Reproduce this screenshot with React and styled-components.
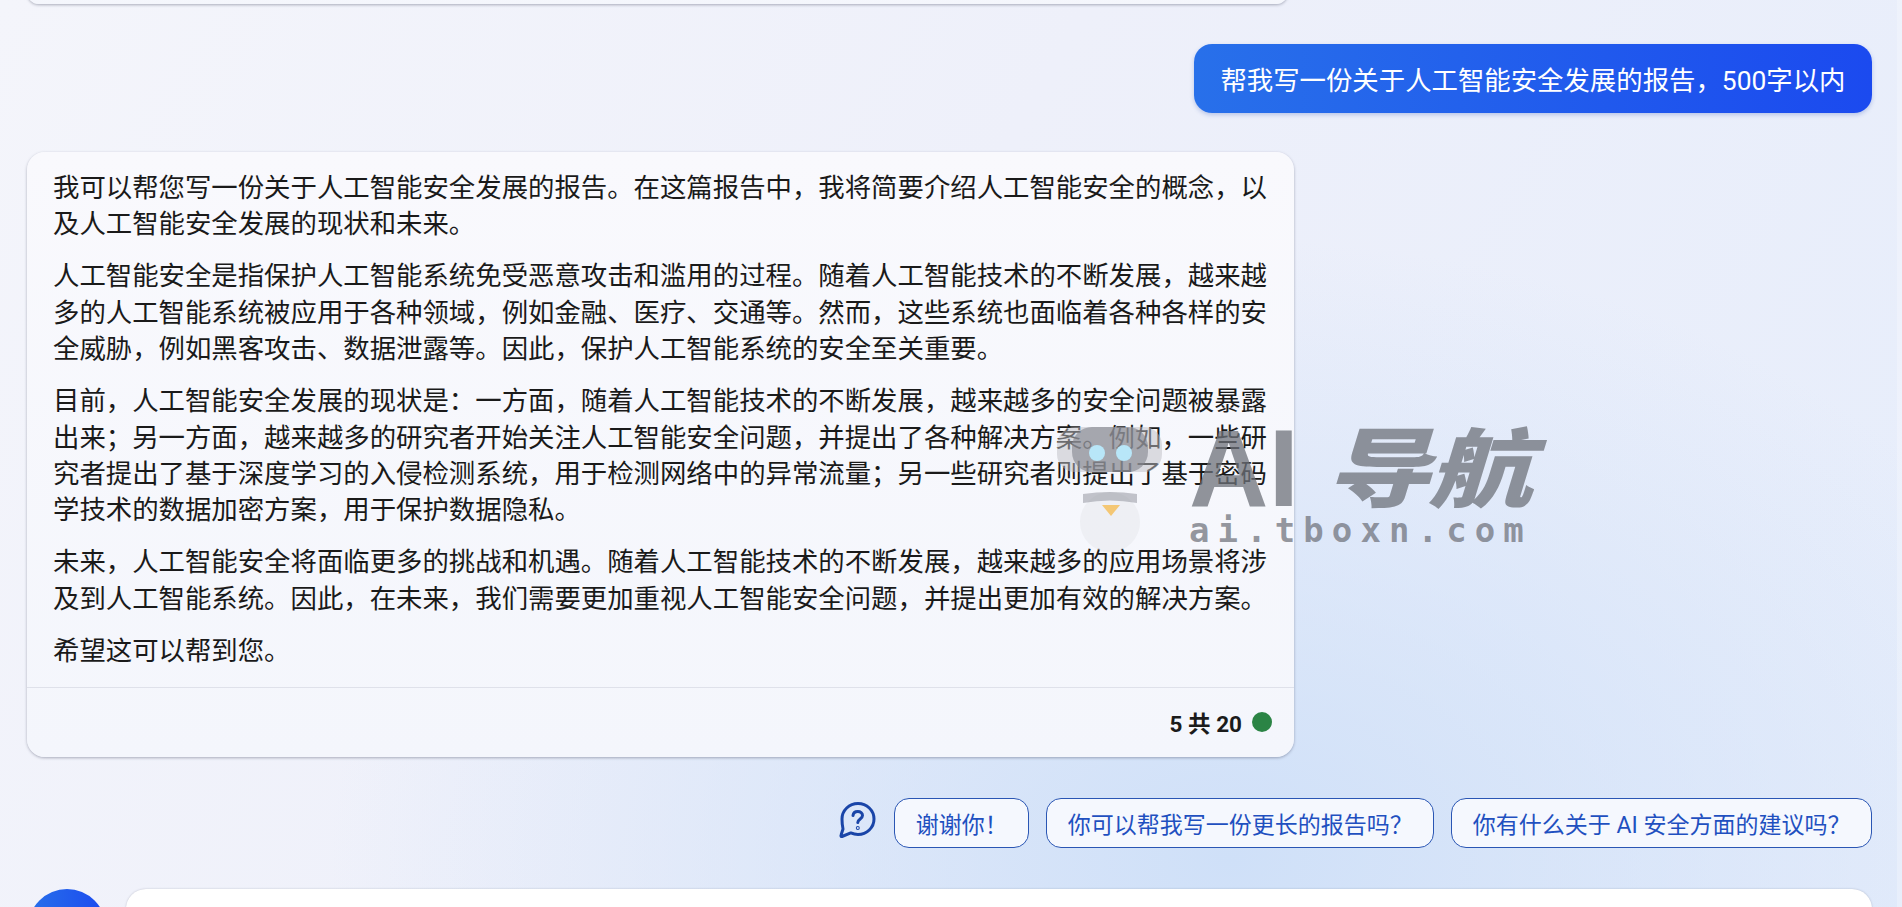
import styled, { createGlobalStyle } from "styled-components";

const Global = createGlobalStyle`
  html, body {
    margin: 0;
    height: 100%;
    overflow: hidden;
  }
`;

const Page = styled.div`
  width: 1902px;
  height: 907px;
  overflow: hidden;
  position: relative;
  box-sizing: border-box;
  padding-right: 30px;
  background:
    radial-gradient(ellipse 900px 620px at 1230px 860px, #cfe0f8 0%, rgba(207, 224, 248, 0.55) 45%, rgba(207, 224, 248, 0) 100%),
    linear-gradient(120deg, #f4f5fb 0%, #eef0fa 45%, #e6edfb 100%);
  font-family: Roboto, "Noto Sans CJK SC", sans-serif;
  display: flex;
  flex-direction: column;
`;

const Card = styled.div`
  background: linear-gradient(180deg, #f9f9fd, #f4f6fc);
  border-radius: 18px;
  box-shadow: 0 1px 3px rgba(60, 64, 90, 0.4);
  flex: none;
`;

const PrevCard = styled(Card)`
  width: 1261px;
  height: 24px;
  margin: -20px 0 0 27px;
`;

const UserRow = styled.div`
  display: flex;
  justify-content: flex-end;
  margin-top: 40px;
  flex: none;
`;

const UserBubble = styled.div`
  height: 69px;
  padding: 0 26.5px;
  display: flex;
  align-items: center;
  border-radius: 18px;
  color: #fff;
  font-size: 26.4px;
  background: linear-gradient(90deg, #2870ea, #1b4aef);
  box-shadow: 0 2px 4px rgba(30, 70, 180, 0.25);
`;

const AnswerCard = styled(Card)`
  width: 1267px;
  margin: 39px 0 0 27px;
`;

const AnswerBody = styled.div`
  padding: 18px 24px 18px 26px;
  color: #1a1a1a;
  font-size: 26.4px;
  line-height: 36.4px;
`;

const Para = styled.p`
  margin: 0 0 15.6px;
  &:last-child {
    margin-bottom: 0;
  }
`;

const AnswerFoot = styled.div`
  height: 67px;
  padding: 0 22px 2px 0;
  border-top: 1px solid #dfe1ea;
  display: flex;
  align-items: center;
  justify-content: flex-end;
  gap: 10px;
  font-size: 22.5px;
  font-weight: 700;
  color: #1b1b1b;
`;

const Dot = styled.span`
  width: 20px;
  height: 20px;
  border-radius: 50%;
  background: #2b8445;
`;

const SuggestRow = styled.div`
  display: flex;
  justify-content: flex-end;
  align-items: center;
  gap: 17px;
  margin-top: 41px;
  flex: none;
`;

const Suggest = styled.div`
  height: 48px;
  padding: 0 20.5px;
  display: flex;
  align-items: center;
  border: 1px solid #2a56b4;
  border-radius: 15px;
  background: #f5f8fe;
  color: #1f50c0;
  font-size: 23px;
`;

const HelpIcon = styled.svg`
  width: 40px;
  height: 40px;
  margin-bottom: 7px;
  color: #1a45a8;
`;

const InputRow = styled.div`
  display: flex;
  gap: 20px;
  margin: 41px 0 0 28px;
  flex: none;
`;

const Avatar = styled.div`
  width: 78px;
  height: 78px;
  flex: none;
  border-radius: 50%;
  background: linear-gradient(90deg, #2870ea, #1b4aef);
`;

const InputBox = styled.div`
  flex: 1;
  height: 80px;
  background: #fff;
  border-radius: 20px;
  box-shadow: 0 0 2px rgba(60, 64, 90, 0.3);
`;

const ScrollTrack = styled.div`
  position: absolute;
  top: 0;
  right: 0;
  width: 5px;
  height: 100%;
  background: rgba(255, 255, 255, 0.25);
`;

const Watermark = styled.div`
  position: absolute;
  left: 1050px;
  top: 420px;
  width: 500px;
  height: 135px;
  pointer-events: none;
`;

const MarkTitle = styled.div`
  position: absolute;
  left: 139px;
  top: -17px;
  font-family: "Liberation Sans", "Noto Sans CJK SC", sans-serif;
  font-size: 110px;
  line-height: 130px;
  font-weight: 700;
  color: rgba(110, 113, 122, 0.75);
  white-space: nowrap;
  display: flex;
  gap: 27px;
`;

const MarkHan = styled.span`
  display: inline-block;
  font-size: 104px;
  font-weight: 900;
  font-style: italic;
  letter-spacing: -2px;
  transform: scaleY(0.82);
  transform-origin: 50% 62%;
`;

const MarkUrl = styled.div`
  position: absolute;
  left: 139px;
  top: 88px;
  font-family: "DejaVu Sans Mono", monospace;
  font-size: 34px;
  line-height: 44px;
  font-weight: 700;
  letter-spacing: 8.1px;
  color: rgba(110, 113, 122, 0.72);
  white-space: nowrap;
`;

const MarkBot = styled.svg`
  position: absolute;
  left: 0;
  top: 0;
  width: 120px;
  height: 135px;
`;

export default function App() {
  return (
    <Page>
      <Global />
      <PrevCard />
      <UserRow>
        <UserBubble>帮我写一份关于人工智能安全发展的报告，500字以内</UserBubble>
      </UserRow>
      <AnswerCard>
        <AnswerBody>
          <Para>我可以帮您写一份关于人工智能安全发展的报告。在这篇报告中，我将简要介绍人工智能安全的概念，以及人工智能安全发展的现状和未来。</Para>
          <Para>人工智能安全是指保护人工智能系统免受恶意攻击和滥用的过程。随着人工智能技术的不断发展，越来越多的人工智能系统被应用于各种领域，例如金融、医疗、交通等。然而，这些系统也面临着各种各样的安全威胁，例如黑客攻击、数据泄露等。因此，保护人工智能系统的安全至关重要。</Para>
          <Para>目前，人工智能安全发展的现状是：一方面，随着人工智能技术的不断发展，越来越多的安全问题被暴露出来；另一方面，越来越多的研究者开始关注人工智能安全问题，并提出了各种解决方案。例如，一些研究者提出了基于深度学习的入侵检测系统，用于检测网络中的异常流量；另一些研究者则提出了基于密码学技术的数据加密方案，用于保护数据隐私。</Para>
          <Para>未来，人工智能安全将面临更多的挑战和机遇。随着人工智能技术的不断发展，越来越多的应用场景将涉及到人工智能系统。因此，在未来，我们需要更加重视人工智能安全问题，并提出更加有效的解决方案。</Para>
          <Para>希望这可以帮到您。</Para>
        </AnswerBody>
        <AnswerFoot>
          <span>5 共 20</span>
          <Dot />
        </AnswerFoot>
      </AnswerCard>
      <SuggestRow>
        <HelpIcon viewBox="0 0 40 40" fill="none" stroke="currentColor" strokeWidth="3" strokeLinecap="round" strokeLinejoin="round">
          <path d="M21 3.5c8.800 0 16 6.900 16 15.500s-7.200 15.500-16 15.500c-2.600 0-5-.6-7.200-1.600L5 36.500c-.8.200-1.300-.5-1-1.200l2-6.300C5.400 26.300 5 22.800 5 19 5 10.400 12.200 3.500 21 3.500z" />
          <path d="M16 15.500c.3-2.500 2.300-4 4.800-4 2.700 0 4.700 1.600 4.700 4 0 3.400-4.700 3.500-4.700 7" />
          <circle cx="20.800" cy="28" r="0.5" />
        </HelpIcon>
        <Suggest>谢谢你！</Suggest>
        <Suggest>你可以帮我写一份更长的报告吗？</Suggest>
        <Suggest>你有什么关于 AI 安全方面的建议吗？</Suggest>
      </SuggestRow>
      <InputRow>
        <Avatar />
        <InputBox />
      </InputRow>
      <ScrollTrack />
      <Watermark>
        <MarkBot viewBox="0 0 120 135">
          <rect x="7" y="7" width="105" height="45" rx="18" fill="rgba(190,190,196,0.5)" />
          <rect x="22" y="7" width="76" height="45" rx="20" fill="rgba(130,132,140,0.6)" />
          <circle cx="47" cy="33" r="8" fill="#b8e6f8" />
          <circle cx="74" cy="33" r="8" fill="#b8e6f8" />
          <circle cx="60" cy="102" r="30" fill="rgba(230,231,236,0.5)" />
          <path d="M33 74q27-4 54 0v9q-27-5-54 0z" fill="rgba(150,152,160,0.55)" />
          <path d="M52 85h18l-9 11z" fill="#f4c774" />
        </MarkBot>
        <MarkTitle>
          <span>AI</span>
          <MarkHan>导航</MarkHan>
        </MarkTitle>
        <MarkUrl>ai.tboxn.com</MarkUrl>
      </Watermark>
    </Page>
  );
}
